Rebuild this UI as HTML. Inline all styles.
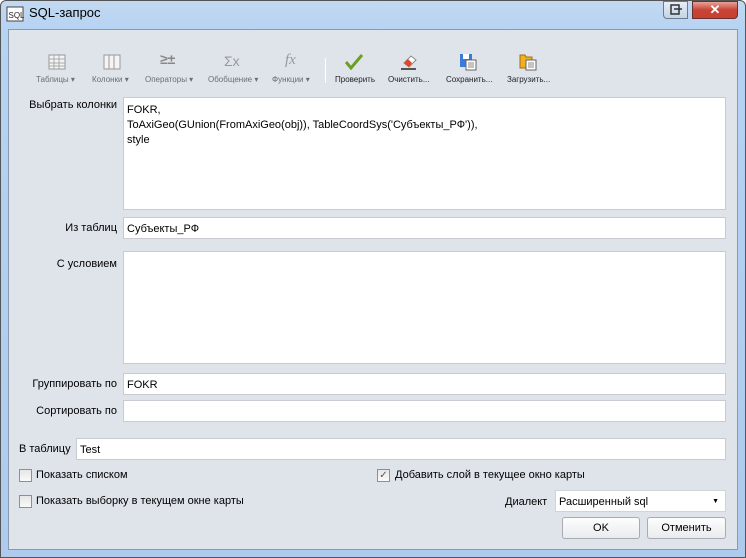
<!DOCTYPE html>
<html><head><meta charset="utf-8"><style>
*{box-sizing:border-box;margin:0;padding:0}
body{width:746px;height:558px;overflow:hidden;background:#fff;font-family:"Liberation Sans",sans-serif;font-size:11px;color:#000;position:relative}
.frame{position:absolute;left:0;top:0;width:746px;height:558px;border:1px solid #555;border-radius:6px 6px 0 0;background:linear-gradient(#c2d9f1,#b6d3f2 30px,#aecbee);}
.inner{position:absolute;left:8px;top:29px;width:730px;height:521px;background:#dfe3ea;border:1px solid #8a9aae}
.abs{position:absolute}
.inp{position:absolute;background:#fff;border:1px solid #c8ccd2;padding:4px 3px 0;line-height:15px;white-space:pre}
.lbl{position:absolute;text-align:right;width:110px;left:0}
.tb{position:absolute;top:75px;font-size:8px;color:#6a6f76;text-align:center}
.tb.d{color:#222}
.cb{position:absolute;width:13px;height:13px;border:1px solid #8e8f8f;background:linear-gradient(#e6e6e6,#fafafa)}
.btn{position:absolute;height:22px;border:1px solid #a8acb2;border-radius:3px;background:linear-gradient(#fdfdfd,#e9ebee);text-align:center;line-height:20px}
</style></head><body>
<div class="frame"></div>
<svg class="abs" style="left:6px;top:6px" width="18" height="16"><rect x="1" y="1" width="16" height="14" fill="#fff" stroke="#444"/><text x="2.5" y="12" font-size="8" font-family="Liberation Sans" fill="#222">SQL</text></svg>
<div class="abs" style="left:29px;top:5px;font-size:13px;color:#000">SQL-запрос</div>
<div class="abs" style="left:663px;top:1px;width:25px;height:18px;border:1px solid #6a7a90;border-radius:0 0 0 4px;background:linear-gradient(#e7eef7,#c4d3e5)"><svg width="23" height="16"><rect x="7" y="3" width="8" height="9" fill="none" stroke="#333" stroke-width="1.5"/><path d="M10 7h8" stroke="#333" stroke-width="1.5"/></svg></div>
<div class="abs" style="left:692px;top:1px;width:46px;height:18px;border:1px solid #6a3030;border-radius:0 0 4px 0;background:linear-gradient(#e8a39a,#c74436 50%,#c9402f);color:#fff;text-align:center;font-weight:bold;font-size:13px;line-height:16px">✕</div>
<div class="inner"></div>

<svg class="abs" style="left:48px;top:54px" width="18" height="16"><rect x="1" y="1" width="16" height="14" fill="#f4f4f4" stroke="#999"/><path d="M1 5h16M1 9h16M1 12h16M6 1v14M11 1v14" stroke="#aaa"/></svg>
<div class="tb" style="left:36px">Таблицы ▾</div>
<svg class="abs" style="left:103px;top:54px" width="18" height="16"><rect x="1" y="1" width="16" height="14" fill="#f4f4f4" stroke="#999"/><path d="M6 1v14M11 1v14" stroke="#999"/></svg>
<div class="tb" style="left:92px">Колонки ▾</div>
<div class="abs" style="left:160px;top:51px;color:#888;font-size:14px;font-weight:bold">≥±</div>
<div class="tb" style="left:145px">Операторы ▾</div>
<div class="abs" style="left:224px;top:53px;color:#999;font-size:14px">Σx</div>
<div class="tb" style="left:208px">Обобщение ▾</div>
<div class="abs" style="left:285px;top:52px;color:#999;font-size:15px;font-style:italic;font-family:'Liberation Serif',serif">fx</div>
<div class="tb" style="left:272px">Функции ▾</div>
<div class="abs" style="left:325px;top:58px;width:1px;height:25px;background:#fff"></div>
<svg class="abs" style="left:345px;top:54px" width="18" height="16"><path d="M1 8l5 6L17 1" fill="none" stroke="#6aa020" stroke-width="3"/></svg>
<div class="tb d" style="left:335px">Проверить</div>
<svg class="abs" style="left:400px;top:54px" width="18" height="17"><path d="M4 9l7-7 5 4-7 7z" fill="#fff" stroke="#888"/><path d="M4 9l4-4 4 4-3 4z" fill="#e04828"/><path d="M1 15h15" stroke="#555" stroke-width="2"/></svg>
<div class="tb d" style="left:388px">Очистить...</div>
<svg class="abs" style="left:459px;top:53px" width="18" height="18"><rect x="1" y="1" width="12" height="13" fill="#3c7ad8"/><rect x="4" y="1" width="6" height="5" fill="#fff"/><rect x="7" y="7" width="10" height="10" fill="#fff" stroke="#666"/><path d="M9 10h6M9 12h6M9 14h6" stroke="#888"/></svg>
<div class="tb d" style="left:446px">Сохранить...</div>
<svg class="abs" style="left:519px;top:53px" width="18" height="18"><path d="M1 2h5l1 2h6v11H1z" fill="#f0b020" stroke="#a07010"/><rect x="7" y="7" width="10" height="10" fill="#fff" stroke="#666"/><path d="M9 10h6M9 12h6M9 14h6" stroke="#888"/></svg>
<div class="tb d" style="left:507px">Загрузить...</div>

<div class="lbl" style="left:7px;top:99px">Выбрать колонки</div>
<div class="inp" style="left:123px;top:97px;width:603px;height:113px;padding-top:5px">FOKR,
ToAxiGeo(GUnion(FromAxiGeo(obj)), TableCoordSys('Субъекты_РФ')),
style</div>
<div class="lbl" style="left:7px;top:222px">Из таблиц</div>
<div class="inp" style="left:123px;top:217px;width:603px;height:22px">Субъекты_РФ</div>
<div class="lbl" style="left:7px;top:258px">С условием</div>
<div class="inp" style="left:123px;top:251px;width:603px;height:113px"></div>
<div class="lbl" style="left:7px;top:378px">Группировать по</div>
<div class="inp" style="left:123px;top:373px;width:603px;height:22px">FOKR</div>
<div class="lbl" style="left:7px;top:405px">Сортировать по</div>
<div class="inp" style="left:123px;top:400px;width:603px;height:22px"></div>
<div class="abs" style="left:19px;top:443px">В таблицу</div>
<div class="inp" style="left:76px;top:438px;width:650px;height:22px">Test</div>

<div class="cb" style="left:19px;top:469px"></div><div class="abs" style="left:36px;top:469px">Показать списком</div>
<div class="cb" style="left:377px;top:469px;font-size:10px;line-height:11px;text-align:center;color:#555">✓</div><div class="abs" style="left:395px;top:469px">Добавить слой в текущее окно карты</div>
<div class="cb" style="left:19px;top:495px"></div><div class="abs" style="left:36px;top:495px">Показать выборку в текущем окне карты</div>
<div class="abs" style="left:505px;top:496px">Диалект</div>
<div class="inp" style="left:555px;top:490px;width:171px;height:22px;border-color:#d0d3d8">Расширенный sql<span style="position:absolute;right:6px;top:3px;font-size:7px">▼</span></div>
<div class="btn" style="left:562px;top:517px;width:78px">OK</div>
<div class="btn" style="left:647px;top:517px;width:79px">Отменить</div>
</body></html>
